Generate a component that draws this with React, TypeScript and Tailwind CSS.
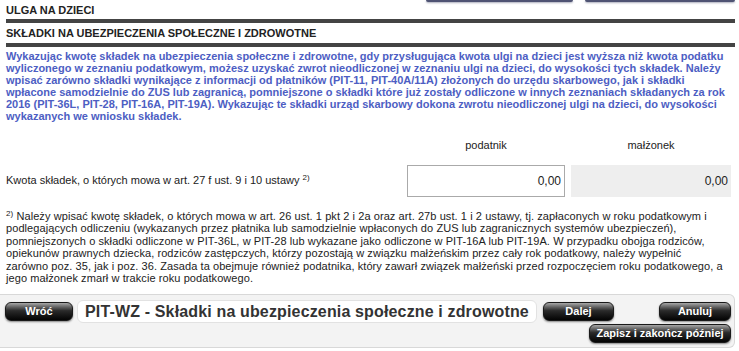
import React from 'react';

const blueLines = [
    'Wykazując kwotę składek na ubezpieczenia społeczne i zdrowotne, gdy przysługująca kwota ulgi na dzieci jest wyższa niż kwota podatku',
    'wyliczonego w zeznaniu podatkowym, możesz uzyskać zwrot nieodliczonej w zeznaniu ulgi na dzieci, do wysokości tych składek. Należy',
    'wpisać zarówno składki wynikające z informacji od płatników (PIT-11, PIT-40A/11A) złożonych do urzędu skarbowego, jak i składki',
    'wpłacone samodzielnie do ZUS lub zagranicą, pomniejszone o składki które już zostały odliczone w innych zeznaniach składanych za rok',
    '2016 (PIT-36L, PIT-28, PIT-16A, PIT-19A). Wykazując te składki urząd skarbowy dokona zwrotu nieodliczonej ulgi na dzieci, do wysokości',
    'wykazanych we wniosku składek.',
];

const noteLines = [
    'podlegających odliczeniu (wykazanych przez płatnika lub samodzielnie wpłaconych do ZUS lub zagranicznych systemów ubezpieczeń),',
    'pomniejszonych o składki odliczone w PIT-36L, w PIT-28 lub wykazane jako odliczone w PIT-16A lub PIT-19A. W przypadku obojga rodziców,',
    'opiekunów prawnych dziecka, rodziców zastępczych, którzy pozostają w związku małżeńskim przez cały rok podatkowy, należy wypełnić',
    'zarówno poz. 35, jak i poz. 36. Zasada ta obejmuje również podatnika, który zawarł związek małżeński przed rozpoczęciem roku podatkowego, a',
    'jego małżonek zmarł w trakcie roku podatkowego.',
];

const DarkButton: React.FC<{ label: string; className?: string }> = ({ label, className = '' }) => (
    <button
        className={`h-[19px] rounded-[6px] border border-[#1a1a1a] bg-gradient-to-b from-[#a8a8a8] via-[#2b2b2b] via-45% to-[#050505] text-[11px] font-bold leading-none text-white shadow-[0_1px_2px_rgba(0,0,0,0.45)] ${className}`}
    >
        {label}
    </button>
);

const App: React.FC = () => {
    return (
        <div className="w-[739px] h-[351px] overflow-hidden bg-white font-['Liberation_Sans',Arial,sans-serif] text-[#222]">
            {/* bottoms of the tabs above */}
            <div className="flex h-[4px] gap-[12px] pl-[426px]">
                <div className="w-[147px] h-[2px] rounded-b-[4px] bg-[#4f5373] shadow-[0_1px_2px_rgba(60,64,100,0.45)]" />
                <div className="w-[150px] h-[2px] rounded-b-[4px] bg-[#4f5373] shadow-[0_1px_2px_rgba(60,64,100,0.45)]" />
            </div>

            <div className="pl-[6px] pr-[4px]">
                <h2 className="text-[11px] font-bold leading-[10px] pt-[1px]">ULGA NA DZIECI</h2>
                <div className="mt-[4px] h-[4px] bg-[#444]" />
                <h3 className="mt-[4px] text-[11px] font-bold leading-[12px]">SKŁADKI NA UBEZPIECZENIA SPOŁECZNE I ZDROWOTNE</h3>
                <div className="mt-[4px] h-[4px] bg-[#444]" />

                <p className="mt-[3px] text-[11px] font-bold leading-[12px] text-[#4d5ec3] whitespace-nowrap">
                    {blueLines.map((line, i) => (
                        <span key={i} className="block">{line}</span>
                    ))}
                </p>

                <div className="mt-[15px] grid grid-cols-[395px_158px_160px] gap-x-[6px] items-center text-[11px]">
                    <div />
                    <div className="text-center">podatnik</div>
                    <div className="text-center">małżonek</div>
                    <div className="mt-[11px]">
                        Kwota składek, o których mowa w art. 27 f ust. 9 i 10 ustawy <sup className="text-[8px]">2)</sup>
                    </div>
                    <div className="mt-[11px] h-[32px] border border-[#aaa] bg-white flex items-center justify-end pr-[3px] text-[12px]">0,00</div>
                    <div className="mt-[11px] h-[32px] bg-[#eeeeee] flex items-center justify-end pr-[3px] text-[12px]">0,00</div>
                </div>

                <div className="mt-[13px] text-[11px] leading-[12.6px] tracking-[0.08px] whitespace-nowrap">
                    <span className="block">
                        <sup className="text-[8px]">2)</sup> Należy wpisać kwotę składek, o których mowa w art. 26 ust. 1 pkt 2 i 2a oraz art. 27b ust. 1 i 2 ustawy, tj. zapłaconych w roku podatkowym i
                    </span>
                    {noteLines.map((line, i) => (
                        <span key={i} className="block">{line}</span>
                    ))}
                </div>
            </div>

            {/* navigation bar */}
            <div className="mt-[9px] mr-[4px] h-[54px] rounded-r-[6px] border border-l-0 border-[#d8d8d8] bg-[#f3f3f3] pl-[5px] pr-[3px] pt-[5px]">
                <div className="flex items-center">
                    <DarkButton label="Wróć" className="w-[68px]" />
                    <div className="ml-[4px] w-[460px] h-[23px] rounded-[6px] border border-[#e2e2e2] bg-white pl-[7px] text-[16px] font-bold leading-[21px] tracking-[0.15px] text-[#333] whitespace-nowrap">
                        PIT-WZ - Składki na ubezpieczenia społeczne i zdrowotne
                    </div>
                    <DarkButton label="Dalej" className="ml-[6px] w-[71px]" />
                    <div className="flex-1" />
                    <DarkButton label="Anuluj" className="w-[72px]" />
                </div>
                <div className="flex justify-end mt-[1px]">
                    <DarkButton label="Zapisz i zakończ później" className="w-[142px]" />
                </div>
            </div>
        </div>
    );
};

export default App;
